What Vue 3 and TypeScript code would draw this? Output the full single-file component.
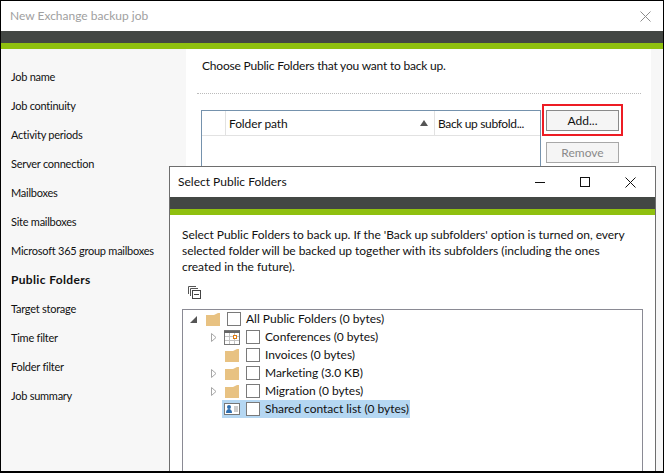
<script setup lang="ts">
interface TreeRow { label: string; kind: 'folder' | 'calendar' | 'contact'; arrow: boolean; selected?: boolean }
const nav: string[] = ['Job name', 'Job continuity', 'Activity periods', 'Server connection', 'Mailboxes', 'Site mailboxes', 'Microsoft 365 group mailboxes', 'Public Folders', 'Target storage', 'Time filter', 'Folder filter', 'Job summary']
const rows: TreeRow[] = [
  { label: 'Conferences (0 bytes)', kind: 'calendar', arrow: true },
  { label: 'Invoices (0 bytes)', kind: 'folder', arrow: false },
  { label: 'Marketing (3.0 KB)', kind: 'folder', arrow: true },
  { label: 'Migration (0 bytes)', kind: 'folder', arrow: true },
  { label: 'Shared contact list (0 bytes)', kind: 'contact', arrow: false, selected: true },
]
</script>

<template>
  <div class="win">
    <header class="titlebar">
      <span class="title">New Exchange backup job</span>
      <svg class="close" width="11" height="11" viewBox="0 0 11 11"><path d="M.5.5l10 10M10.500.5l-10 10" stroke="#8c8c8c" fill="none"/></svg>
    </header>
    <div class="band"></div>
    <div class="body">
      <nav class="side">
        <div v-for="n in nav" :key="n" class="nav" :class="{ on: n === 'Public Folders' }">{{ n }}</div>
      </nav>
      <main class="content">
        <p class="lead">Choose Public Folders that you want to back up.</p>
        <div class="dots"></div>
        <div class="tablerow">
          <div class="table">
            <div class="thead">
              <div class="c0"></div>
              <div class="c1">Folder path<svg class="sort" width="8" height="6" viewBox="0 0 8 6"><path d="M4 0l4 6H0z" fill="#555"/></svg></div>
              <div class="c2">Back up subfold...</div>
            </div>
          </div>
          <div class="btns">
            <div class="hilite"><button class="btn">Add...</button></div>
            <button class="btn dis">Remove</button>
          </div>
        </div>
      </main>
      <div class="strip"></div>
    </div>

    <section class="dlg">
      <header class="dtitle">
        <span>Select Public Folders</span>
        <div class="ctrls">
          <svg width="11" height="11" viewBox="0 0 11 11"><path d="M0 5.500h10" stroke="#111"/></svg>
          <svg width="11" height="11" viewBox="0 0 11 11"><rect x=".5" y=".5" width="9" height="9" fill="none" stroke="#111"/></svg>
          <svg width="11" height="11" viewBox="0 0 11 11"><path d="M.5.5l10 10M10.500.5l-10 10" stroke="#111" fill="none"/></svg>
        </div>
      </header>
      <div class="band"></div>
      <div class="dbody">
        <p class="desc">Select Public Folders to back up. If the 'Back up subfolders' option is turned on, every selected folder will be backed up together with its subfolders (including the ones created in the future).</p>
        <svg class="collapse" width="13" height="13" viewBox="0 0 13 13">
          <path d="M.5 8V.5H8M2.500 10V2.500H10" fill="none" stroke="#555"/>
          <rect x="4.500" y="4.500" width="8" height="8" fill="#fff" stroke="#444"/>
          <path d="M6 8.500h5" stroke="#444"/>
        </svg>
        <div class="tree">
          <div class="row root">
            <svg class="arrow" width="7" height="7" viewBox="0 0 7 7"><path d="M7 0v7H0z" fill="#555"/></svg>
            <svg class="folder" width="14" height="13" viewBox="0 0 14 13"><path d="M0 2h8l4-2h2v13H0z" fill="#e8c282"/></svg>
            <span class="check"></span>
            <span class="lbl">All Public Folders (0 bytes)</span>
          </div>
          <div v-for="r in rows" :key="r.label" class="row child">
            <svg v-if="r.arrow" class="arrow2" width="6" height="9" viewBox="0 0 6 9"><path d="M.5.5l4.500 4-4.500 4z" fill="#fff" stroke="#a6a6a6"/></svg>
            <span v-else class="arrow2"></span>
            <div class="sel" :class="{ active: r.selected }">
              <svg v-if="r.kind === 'folder'" class="ico" width="16" height="13" viewBox="-1 0 16 13"><path d="M0 2h8l4-2h2v13H0z" fill="#e8c282"/></svg>
              <svg v-else-if="r.kind === 'calendar'" class="ico" width="16" height="15" viewBox="0 0 16 15">
                <rect x=".5" y=".5" width="15" height="14" fill="#fff" stroke="#777"/>
                <path d="M0 1h16v2H0z" fill="#666"/>
                <path d="M5.500 3v11M10.500 3v11M1 6.500h14M1 10.500h14" stroke="#c4c4c4"/>
                <rect x="9.500" y="5.500" width="3" height="3" fill="#fff" stroke="#e07b10"/>
              </svg>
              <svg v-else class="ico" width="16" height="12" viewBox="0 0 16 12">
                <rect x=".5" y=".5" width="15" height="11" fill="#fff" stroke="#777"/>
                <circle cx="5" cy="4" r="2" fill="#2f6fb0"/>
                <path d="M2 10c0-3 1.500-4 3-4s3 1 3 4z" fill="#2f6fb0"/>
                <path d="M10 4h4M10 6h4M10 8h4" stroke="#999"/>
              </svg>
              <span class="check"></span>
              <span class="lbl">{{ r.label }}</span>
            </div>
          </div>
        </div>
      </div>
    </section>
  </div>
</template>

<style>
html, body { margin: 0; background: #000; }
</style>

<style scoped>
.win { position: relative; box-sizing: border-box; width: 664px; height: 472px; border: 1px solid #000; background: #fff; overflow: hidden; font: 12px/16px Lato, "Open Sans", sans-serif; color: #111; display: flex; flex-direction: column; }
.titlebar { height: 30px; flex: none; display: flex; align-items: center; justify-content: space-between; padding: 0 12px 0 9px; color: #a0a0a0; }
.band { height: 12px; flex: none; background: #434744; border-bottom: 6px solid #8fc00f; }
.body { flex: 1; display: flex; min-height: 0; }
.side { width: 185px; flex: none; background: #f7f7f7; padding-top: 14px; box-sizing: border-box; }
.nav { height: 29px; padding: 6px 10px 0; box-sizing: border-box; white-space: nowrap; font-size: 11px; letter-spacing: -0.25px; }
.nav.on { font-size: 12px; font-weight: 700; letter-spacing: 0.35px; }
.content { flex: 1; padding: 0 10px 0 11px; min-width: 0; }
.lead { margin: 9px 0 0 5px; letter-spacing: -0.2px; }
.dots { margin-top: 19px; border-top: 1px dotted #bbb; }
.tablerow { display: flex; margin: 16px 0 0 4px; gap: 1px; position: relative; }
.table { width: 340px; height: 120px; box-sizing: border-box; border: 1px solid #7592ad; flex: none; }
.thead { display: flex; height: 25px; border-bottom: 1px solid #e2e2e2; box-sizing: border-box; align-items: stretch; }
.thead > div { padding-top: 5px; box-sizing: border-box; }
.c0 { width: 24px; border-right: 1px solid #e2e2e2; }
.c1 { width: 209px; padding-left: 3px; border-right: 1px solid #e2e2e2; position: relative; letter-spacing: -0.1px; }
.sort { position: absolute; right: 6px; top: 9px; }
.c2 { padding-left: 3px; flex: 1; letter-spacing: -0.35px; white-space: nowrap; }
.btns { display: flex; flex-direction: column; gap: 6px; margin-top: -6px; }
.hilite { border: 2px solid #ed1c24; padding: 4px 2px 3px; }
.btn { display: block; width: 73px; height: 21px; padding: 0; border: 1px solid #8a8a8a; background: #f5f5f5; font: inherit; color: #111; }
.btn.dis { color: #8a8a8a; margin-left: 4px; border-color: #a8a8a8; }
.strip { width: 12px; flex: none; background: #f7f7f7; }
.dlg { position: absolute; left: 168px; top: 165px; width: 487px; height: 320px; box-sizing: border-box; border: 1px solid #6e6e6e; background: #fff; display: flex; flex-direction: column; }
.dtitle { height: 30px; flex: none; display: flex; align-items: center; justify-content: space-between; padding: 0 19px 0 8px; }
.ctrls { display: flex; gap: 34px; align-items: center; }
.ctrls svg { display: block; }
.dbody { padding: 0 12px; }
.desc { margin: 12px 0 0; max-width: 450px; letter-spacing: -0.04px; }
.collapse { display: block; margin: 11px 0 0 6px; }
.tree { box-sizing: border-box; height: 200px; margin-top: 10px; border: 1px solid #8a8a94; }
.row { height: 18px; display: flex; align-items: center; }
.arrow { margin-left: 7px; }
.folder { margin-left: 9px; }
.root .check { margin-left: 7px; }
.root .lbl { margin-left: 5px; }
.arrow2 { width: 6px; margin-left: 28px; flex: none; }
.sel { display: flex; align-items: center; height: 18px; margin-left: 5px; padding: 0 1px 0 2px; }
.sel.active { background: #b5d7f2; }
.ico { flex: none; margin-right: 6px; }
.check { width: 14px; height: 14px; box-sizing: border-box; border: 1px solid #7a7a7a; background: #fff; flex: none; }
.sel .lbl { margin-left: 5px; letter-spacing: -0.03px; }
</style>
